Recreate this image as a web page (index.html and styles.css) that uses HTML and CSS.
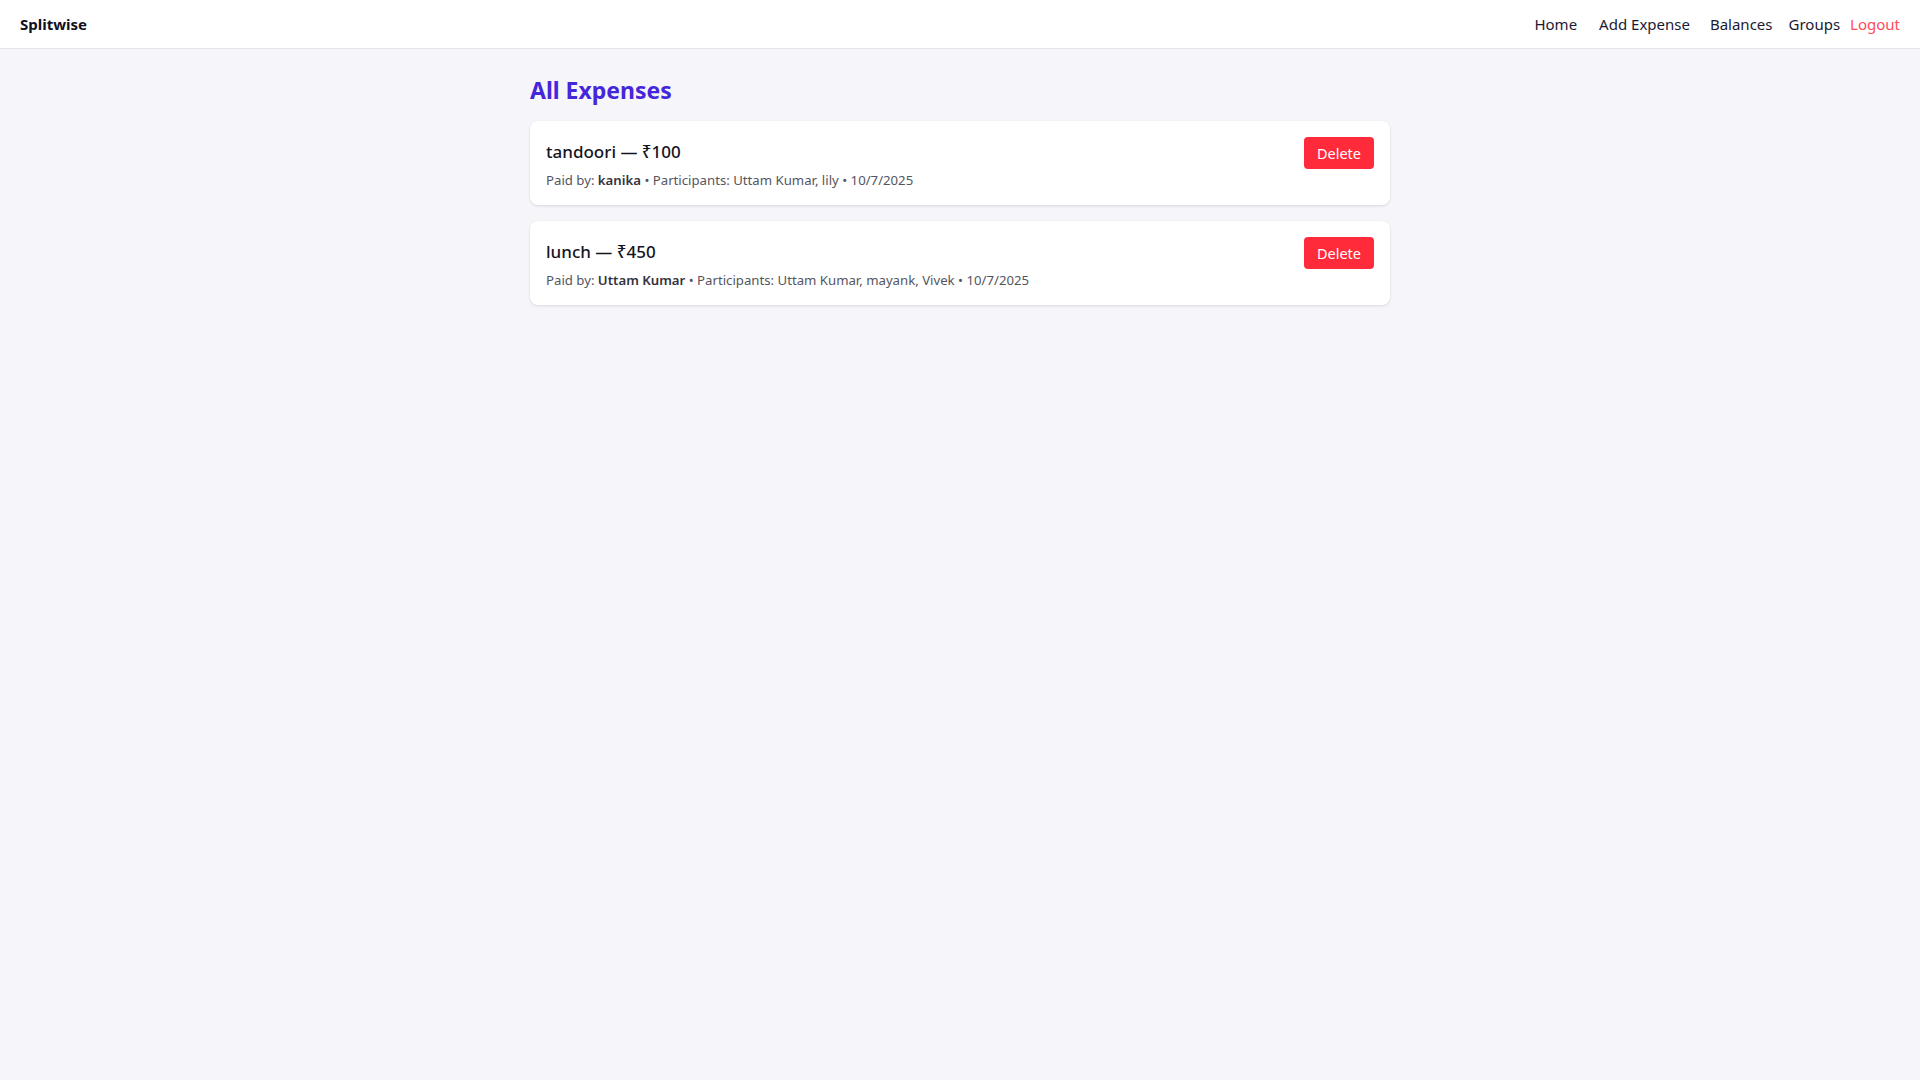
FILE: index.html
```html
<!DOCTYPE html>
<html lang="en">
<head>
<meta charset="utf-8">
<title>Splitwise</title>
<link rel="stylesheet" href="styles.css">
</head>
<body>
<header class="navbar">
  <div class="brand">Splitwise</div>
  <nav class="nav-links">
    <a class="nav-link" href="#">Home</a>
    <a class="nav-link nav-link-add" href="#">Add Expense</a>
    <a class="nav-link nav-link-balances" href="#">Balances</a>
    <a class="nav-link nav-link-groups" href="#">Groups</a>
    <button class="logout">Logout</button>
  </nav>
</header>
<main class="container">
  <h2 class="page-title">All Expenses</h2>
  <div class="expense-list">
    <div class="expense-card">
      <div class="expense-info">
        <div class="expense-title">tandoori — ₹100</div>
        <div class="expense-meta">Paid by: <strong>kanika</strong> • Participants: Uttam Kumar, lily • 10/7/2025</div>
      </div>
      <button class="btn-delete">Delete</button>
    </div>
    <div class="expense-card">
      <div class="expense-info">
        <div class="expense-title">lunch — ₹450</div>
        <div class="expense-meta">Paid by: <strong>Uttam Kumar</strong> • Participants: Uttam Kumar, mayank, Vivek • 10/7/2025</div>
      </div>
      <button class="btn-delete">Delete</button>
    </div>
  </div>
</main>
</body>
</html>
```
FILE: styles.css
```css
* { box-sizing: border-box; }
html, body {
  margin: 0;
  padding: 0;
  background: #f5f5fa;
  font-family: "Noto Sans", "Open Sans", sans-serif;
  color: #1b1b2a;
}
.navbar {
  height: 49px;
  background: #ffffff;
  border-bottom: 1px solid #e4e4ec;
  display: flex;
  align-items: center;
  justify-content: space-between;
  padding: 0 20px;
}
.brand {
  font-weight: 700;
  font-size: 15px;
  color: #111122;
}
.nav-links {
  display: flex;
  align-items: center;
}
.nav-link {
  font-size: 15px;
  color: #1a1a33;
  text-decoration: none;
  margin-left: 18px;
}
.nav-link-add {
  margin-left: 22px;
}
.nav-link-balances {
  margin-left: 20px;
}
.nav-link-groups {
  margin-left: 16px;
}
.logout {
  font-family: inherit;
  font-size: 15px;
  color: #ff4b5c;
  background: none;
  border: none;
  padding: 0;
  margin-left: 10px;
  cursor: pointer;
}
.container {
  max-width: 900px;
  margin: 0 auto;
  padding: 25px 20px 20px;
}
.page-title {
  margin: 0 0 15px;
  font-size: 23px;
  line-height: 32px;
  font-weight: 700;
  color: #4527d9;
}
.expense-list {
  display: flex;
  flex-direction: column;
  gap: 16px;
}
.expense-card {
  background: #ffffff;
  border-radius: 8px;
  box-shadow: 0 1px 3px rgba(0, 0, 0, 0.12);
  padding: 16px;
  height: 84px;
  display: flex;
  justify-content: space-between;
  align-items: flex-start;
}
.expense-info {
  padding-top: 3px;
}
.expense-title {
  font-size: 17px;
  line-height: 24px;
  font-weight: 500;
  color: #15151f;
}
.expense-meta {
  margin-top: 7px;
  font-size: 13.2px;
  line-height: 18px;
  color: #555560;
}
.expense-meta strong {
  font-weight: 600;
  color: #333340;
}
.btn-delete {
  font-family: inherit;
  font-size: 14.5px;
  color: #ffffff;
  background: #ff2b3b;
  border: none;
  border-radius: 4px;
  width: 70px;
  height: 32px;
  padding: 0;
  cursor: pointer;
}
```
